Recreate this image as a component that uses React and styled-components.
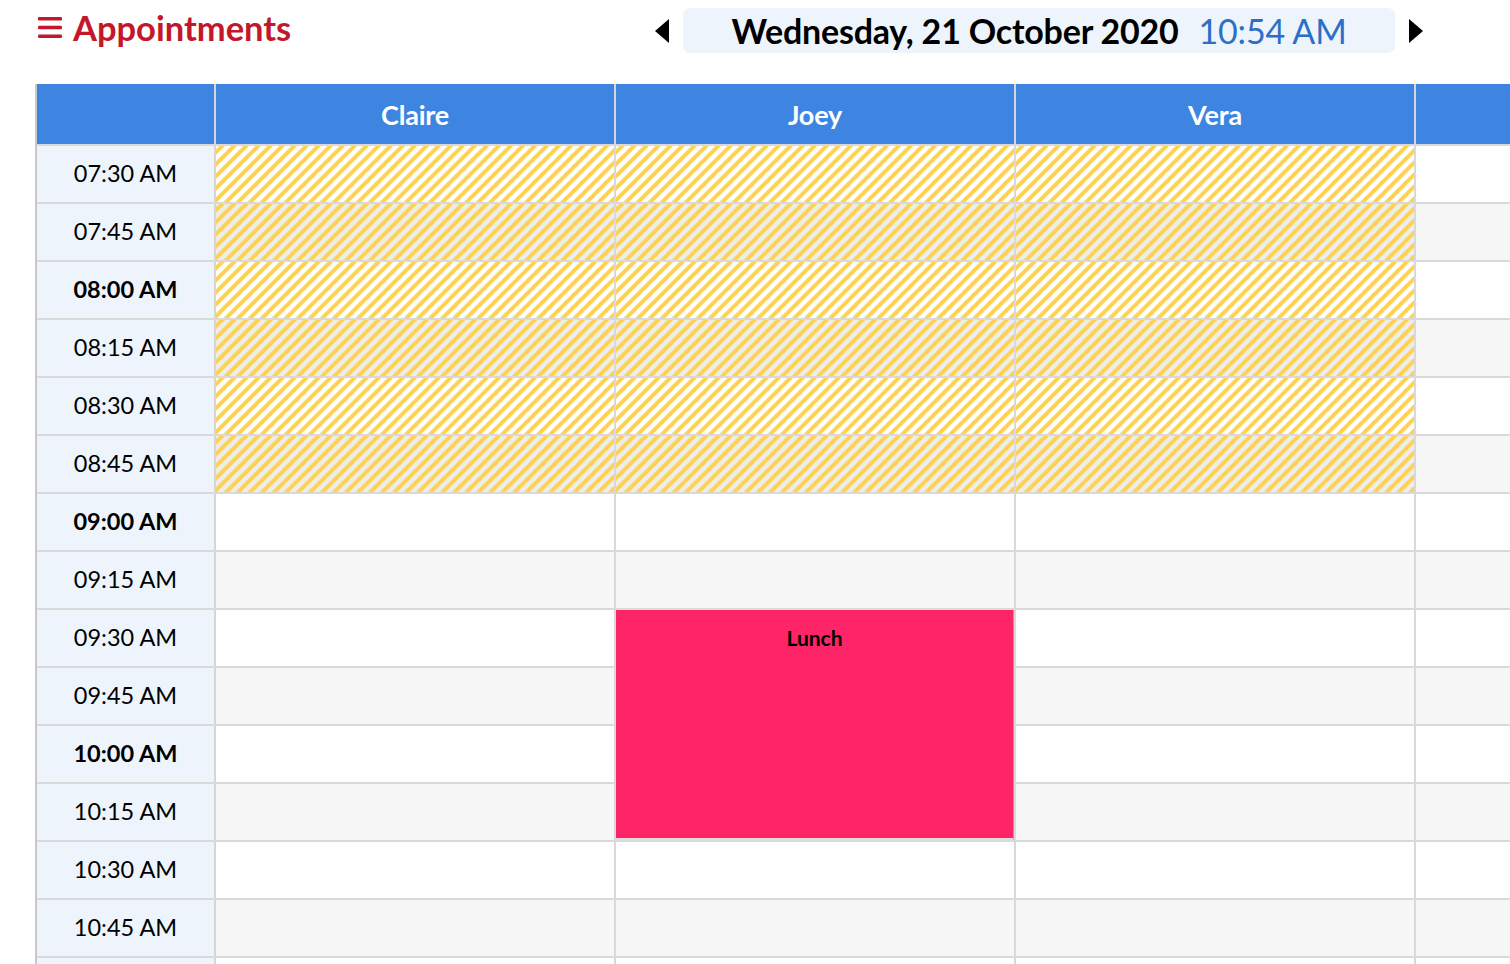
import styled, { createGlobalStyle, css } from "styled-components";

const GlobalStyle = createGlobalStyle`
  html, body {
    margin: 0;
    padding: 0;
    background: #ffffff;
    overflow: hidden;
  }
  body {
    font-family: Lato, "Open Sans", "Liberation Sans", sans-serif;
    color: #000;
  }
`;

const Page = styled.div`
  width: 1510px;
  height: 964px;
  overflow: hidden;
`;

const TopBar = styled.header`
  height: 84px;
  box-sizing: border-box;
  display: flex;
  align-items: flex-start;
  justify-content: space-between;
  padding: 8px 87px 0 38px;
`;

const Title = styled.h1`
  display: flex;
  align-items: center;
  gap: 11px;
  margin: 3px 0 0;
  font-size: 34.5px;
  line-height: 33px;
  font-weight: 700;
  color: #c3172b;
`;

const DateNav = styled.nav`
  display: flex;
  align-items: center;
  gap: 14px;
`;

const ArrowButton = styled.button`
  display: flex;
  align-items: center;
  padding: 0;
  border: 0;
  background: none;
  cursor: pointer;
`;

const DateBox = styled.div`
  width: 712px;
  height: 45px;
  box-sizing: border-box;
  display: flex;
  justify-content: center;
  align-items: center;
  gap: 20px;
  background: #edf4fc;
  border-radius: 7px;
  font-size: 34px;
  line-height: 45px;
  letter-spacing: -0.2px;
`;

const DateText = styled.span`
  font-weight: 700;
  color: #000;
`;

const TimeText = styled.span`
  font-weight: 400;
  color: #2b6fc8;
`;

const Table = styled.div`
  margin-left: 35px;
  border-left: 2px solid #c9c9c9;
  width: max-content;
`;

const Row = styled.div`
  display: grid;
  grid-template-columns: 179px repeat(4, 400px);
  height: 58px;
  box-sizing: border-box;

  & + & {
    border-top: 2px solid #d9d9d9;
  }
`;

const HeaderRow = styled(Row)`
  height: 60px;
  background: #3d85e0;
`;

const HeaderCell = styled.div`
  display: flex;
  align-items: center;
  justify-content: center;
  border-right: 2px solid #d6d6d6;
  color: #ffffff;
  font-size: 27px;
  font-weight: 700;
  letter-spacing: -0.2px;
`;

const TimeCell = styled.div`
  display: flex;
  align-items: center;
  justify-content: center;
  padding-bottom: 3px;
  background: #eef4fc;
  border-right: 2px solid #d6d6d6;
  font-size: 23.5px;
  font-weight: ${(p) => (p.$hour ? 700 : 400)};
`;

const hatch = (gap) => css`
  background: repeating-linear-gradient(
    135deg,
    ${gap} 0px,
    ${gap} 1.6px,
    #fed250 3px,
    #fed250 5.6px,
    ${gap} 7px,
    ${gap} 8.5px
  );
`;

const SlotCell = styled.div`
  position: relative;
  border-right: 2px solid #d9d9d9;
  background: ${(p) => (p.$alt ? "#f7f7f7" : "#ffffff")};
  ${(p) => p.$blocked && hatch(p.$alt ? "#ededed" : "#ffffff")}
`;

const Appointment = styled.div`
  position: absolute;
  z-index: 1;
  left: 0;
  right: 0;
  top: 0;
  height: 231px;
  box-sizing: border-box;
  background: #fd2567;
  border-right: 1px solid #a3a3a3;
  border-bottom: 3px solid #dcdcdc;
  padding-top: 15px;
  text-align: center;
  font-size: 21px;
  line-height: 26px;
  font-weight: 700;
  color: #000;
`;

const Hamburger = () => (
  <svg width="24" height="21" viewBox="0 0 24 21">
    <rect x="0" y="0" width="24" height="3.4" rx="1.2" fill="#c3172b" />
    <rect x="0" y="8.8" width="24" height="3.4" rx="1.2" fill="#c3172b" />
    <rect x="0" y="17.6" width="24" height="3.4" rx="1.2" fill="#c3172b" />
  </svg>
);

const Triangle = ({ dir }) => (
  <svg width="14" height="24" viewBox="0 0 14 24">
    <polygon
      points={dir === "left" ? "14,0 14,24 0,12" : "0,0 0,24 14,12"}
      fill="#000"
    />
  </svg>
);

const staff = ["Claire", "Joey", "Vera", ""];

const times = [
  "07:30 AM",
  "07:45 AM",
  "08:00 AM",
  "08:15 AM",
  "08:30 AM",
  "08:45 AM",
  "09:00 AM",
  "09:15 AM",
  "09:30 AM",
  "09:45 AM",
  "10:00 AM",
  "10:15 AM",
  "10:30 AM",
  "10:45 AM",
];

// the 11:00 row only peeks in at the bottom edge, so it stays empty
const lastRow = "11:00 AM";

const appointments = [{ time: "09:30 AM", staff: 1, title: "Lunch" }];

const App = () => {
  return (
    <Page>
      <GlobalStyle />
      <TopBar>
        <Title>
          <Hamburger />
          Appointments
        </Title>
        <DateNav>
          <ArrowButton aria-label="Previous day">
            <Triangle dir="left" />
          </ArrowButton>
          <DateBox>
            <DateText>Wednesday, 21 October 2020</DateText>
            <TimeText>10:54 AM</TimeText>
          </DateBox>
          <ArrowButton aria-label="Next day">
            <Triangle dir="right" />
          </ArrowButton>
        </DateNav>
      </TopBar>

      <Table>
        <HeaderRow>
          <HeaderCell />
          {staff.map((name, i) => (
            <HeaderCell key={i}>{name}</HeaderCell>
          ))}
        </HeaderRow>
        {times.map((time, row) => (
          <Row key={time}>
            <TimeCell $hour={time.includes(":00")}>{time}</TimeCell>
            {staff.map((name, col) => {
              const appt = appointments.find(
                (a) => a.time === time && a.staff === col
              );
              return (
                <SlotCell
                  key={col}
                  $alt={row % 2 === 1}
                  $blocked={row < 6 && col < 3}
                >
                  {appt && <Appointment>{appt.title}</Appointment>}
                </SlotCell>
              );
            })}
          </Row>
        ))}
        <Row key={lastRow} aria-label={lastRow}>
          <TimeCell />
          {staff.map((name, col) => (
            <SlotCell key={col} />
          ))}
        </Row>
      </Table>
    </Page>
  );
};

export default App;
